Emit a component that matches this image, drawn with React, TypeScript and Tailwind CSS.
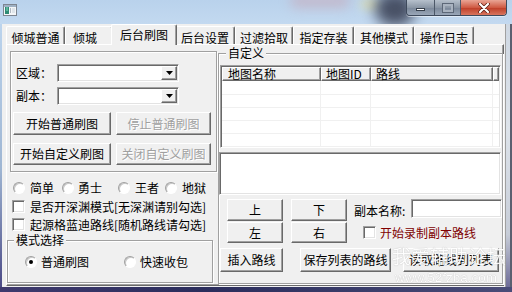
import React from "react"

const raised =
  "border border-t-white border-l-white border-r-[#696969] border-b-[#696969] shadow-[inset_-1px_-1px_0_#a0a0a0]"
const sunken =
  "border border-t-[#a0a0a0] border-l-[#a0a0a0] border-r-white border-b-white shadow-[inset_1px_1px_0_#696969,inset_-1px_-1px_0_#e3e3e3]"
const etched = "border border-[#a0a0a0] shadow-[inset_1px_1px_0_#fff,1px_1px_0_#fff]"

interface Tab {
  label: string
  width: string
  active?: boolean
  align?: string
}

const tabs: Tab[] = [
  { label: "倾城普通", width: "w-[59px]" },
  { label: "倾城", width: "w-[48px]", align: "justify-start pl-[7px]" },
  { label: "后台刷图", width: "w-[66px]", active: true },
  { label: "后台设置", width: "w-[60px]" },
  { label: "过滤拾取", width: "w-[58px]" },
  { label: "指定存装", width: "w-[61px]" },
  { label: "其他模式", width: "w-[60px]" },
  { label: "操作日志", width: "w-[60px]" },
]

function Btn({
  children,
  className = "",
  disabled,
}: {
  children: React.ReactNode
  className?: string
  disabled?: boolean
}) {
  return (
    <button
      type="button"
      className={`${raised} flex shrink-0 items-center justify-center whitespace-nowrap bg-[#f0f0f0] leading-[12px] ${
        disabled ? "text-[#a0a0a0] [text-shadow:1px_1px_0_#fff]" : "text-black"
      } ${className}`}
    >
      {children}
    </button>
  )
}

function Combo() {
  return (
    <div className={`${sunken} flex h-[18px] w-[122px] justify-end bg-white p-[1px]`}>
      <div className={`${raised} flex h-full w-[16px] items-center justify-center bg-[#f0f0f0]`}>
        <svg width="7" height="4" viewBox="0 0 7 4">
          <path d="M0 0h7L3.5 4z" fill="#000" />
        </svg>
      </div>
    </div>
  )
}

function Radio({ checked }: { checked?: boolean }) {
  return (
    <span className="flex h-[12px] w-[12px] shrink-0 items-center justify-center rounded-full border border-t-[#a0a0a0] border-l-[#a0a0a0] border-r-white border-b-white bg-white shadow-[inset_1px_1px_0_#c8c8c8]">
      {checked && <span className="h-[4px] w-[4px] rounded-full bg-black" />}
    </span>
  )
}

function Check() {
  return <span className={`${sunken} block h-[13px] w-[13px] shrink-0 bg-white`} />
}

function WinIcon() {
  return (
    <svg width="14" height="12" viewBox="0 0 14 12">
      <rect x="0.5" y="0.5" width="13" height="11" fill="#f4f6f8" stroke="#7d8590" />
      <rect x="1" y="1" width="12" height="2" fill="#9fb1c4" />
      <rect x="2" y="3" width="4" height="7" fill="#2f8a74" />
      <rect x="3" y="3" width="2" height="4" fill="#5bb59a" />
      <rect x="7" y="4" width="1" height="5" fill="#b0b8c2" />
      <rect x="9" y="4" width="3" height="5" fill="#dfe5ea" />
    </svg>
  )
}

function TitleBar() {
  return (
    <div className="relative flex h-[24px] shrink-0 items-start justify-between overflow-hidden bg-[linear-gradient(180deg,#b9d2ec,#c3d9f0)]">
      {/* glass blur showing through */}
      <div className="absolute left-[290px] top-[-6px] h-[14px] w-[60px] rounded-full bg-[#c9a9b8] opacity-60 blur-[6px]" />
      <div className="absolute left-[360px] top-[-2px] h-[12px] w-[20px] rounded-full bg-[#e8e0a0] opacity-60 blur-[5px]" />
      <div className="absolute left-[375px] top-[-8px] h-[34px] w-[40px] rounded-full bg-[#2b3044] opacity-80 blur-[7px]" />
      <div className="relative ml-[3px] mt-[4px]">
        <WinIcon />
      </div>
      <div className="relative mr-[5px] flex h-[16px] overflow-hidden rounded-b-[4px] border border-t-0 border-[#3e4a5c] shadow-[0_1px_0_rgba(255,255,255,0.5)]">
        <div className="flex w-[28px] items-center justify-center border-r border-[#4c5868] bg-[linear-gradient(180deg,#b6c0cc,#8b97a6_50%,#7a8799_51%,#9aa7b8)]">
          <span className="mt-[3px] block h-[3px] w-[9px] border border-[#37404c] bg-white" />
        </div>
        <div className="flex w-[26px] items-center justify-center border-r border-[#4c5868] bg-[linear-gradient(180deg,#b6c0cc,#8b97a6_50%,#7a8799_51%,#9aa7b8)]">
          <span className="block h-[8px] w-[10px] border-2 border-[#a9b3c0] bg-transparent outline outline-1 outline-[#5d6878]" />
        </div>
        <div className="flex w-[45px] items-center justify-center bg-[linear-gradient(180deg,#e9a595,#cf5a43_50%,#bd3c26_51%,#d8755e)]">
          <svg width="12" height="10" viewBox="0 0 12 10">
            <path d="M2 1l8 8M10 1l-8 8" stroke="#5a1a10" strokeWidth="3.6" strokeLinecap="round" />
            <path d="M2 1l8 8M10 1l-8 8" stroke="#fff" strokeWidth="2.2" strokeLinecap="round" />
          </svg>
        </div>
      </div>
    </div>
  )
}

function TabStrip() {
  return (
    <div className="flex h-[20px] items-end">
      {tabs.map((t) =>
        t.active ? (
          <div
            key={t.label}
            className={`relative z-10 -mx-[2px] -mb-px flex h-[21px] ${t.width} justify-center rounded-t-[2px] border-l border-t border-r border-t-white border-l-white border-r-[#696969] bg-[#f0f0f0] pt-[3px] leading-[13px] shadow-[inset_-1px_0_0_#a0a0a0]`}
          >
            {t.label}
          </div>
        ) : (
          <div
            key={t.label}
            className={`flex h-[18px] ${t.width} ${t.align ?? "justify-center"} rounded-t-[2px] border-l border-t border-r border-t-white border-l-white border-r-[#696969] bg-[#f0f0f0] pt-[4px] leading-[13px] shadow-[inset_-1px_0_0_#a0a0a0]`}
          >
            {t.label}
          </div>
        ),
      )}
    </div>
  )
}

function LeftColumn() {
  return (
    <div className="flex w-[211px] shrink-0 flex-col">
      <div className={`${etched} ml-[3px] mt-[6px] h-[121px] w-[207px]`}>
        <div className="mt-[12px] flex h-[18px] items-center">
          <span className="w-[46px] pl-[5px] leading-[12px]">区域：</span>
          <Combo />
        </div>
        <div className="mt-[5px] flex h-[18px] items-center">
          <span className="w-[46px] pl-[5px] leading-[12px]">副本：</span>
          <Combo />
        </div>
        <div className="mt-[7px] flex gap-[5px] pl-[2px]">
          <Btn className="h-[23px] w-[98px]">开始普通刷图</Btn>
          <Btn className="h-[23px] w-[95px]" disabled>
            停止普通刷图
          </Btn>
        </div>
        <div className="mt-[8px] flex gap-[5px] pl-[2px]">
          <Btn className="h-[22px] w-[98px]">开始自定义刷图</Btn>
          <Btn className="h-[22px] w-[95px]" disabled>
            关闭自定义刷图
          </Btn>
        </div>
      </div>

      <div className="ml-[6px] mt-[9px] flex h-[13px] items-center leading-[12px]">
        <div className="flex w-[49px] items-center gap-[5px]">
          <Radio />
          <span>简单</span>
        </div>
        <div className="flex w-[56px] items-center gap-[4px]">
          <Radio />
          <span>勇士</span>
        </div>
        <div className="flex w-[47px] items-center gap-[5px]">
          <Radio />
          <span>王者</span>
        </div>
        <div className="flex items-center gap-[5px]">
          <Radio />
          <span>地狱</span>
        </div>
      </div>

      <div className="ml-[5px] mt-[6px] flex h-[13px] items-center gap-[5px] leading-[12px]">
        <Check />
        <span className="whitespace-nowrap">是否开深渊模式[无深渊请别勾选]</span>
      </div>
      <div className="ml-[5px] mt-[5px] flex h-[13px] items-center gap-[5px] leading-[12px]">
        <Check />
        <span className="whitespace-nowrap">起源格蓝迪路线[随机路线请勾选]</span>
      </div>

      <fieldset className={`${etched} mt-[3px] h-[49px] w-[206px]`}>
        <legend className="ml-[6px] bg-[#f0f0f0] px-[2px] leading-[12px]">模式选择</legend>
        <div className="mt-[10px] flex items-center pl-[17px] leading-[12px]">
          <div className="flex w-[99px] items-center gap-[4px]">
            <Radio checked />
            <span>普通刷图</span>
          </div>
          <div className="flex items-center gap-[4px]">
            <Radio />
            <span>快速收包</span>
          </div>
        </div>
      </fieldset>
    </div>
  )
}

function ListView() {
  const rows = [14, 13, 13, 13, 13, 13]
  return (
    <div className={`${sunken} ml-[1px] mt-[6px] h-[83px] w-[281px] overflow-hidden bg-white p-[1px]`}>
      <div className="flex h-[14px] leading-[12px]">
        <div className={`${raised} w-[99px] shrink-0 bg-[#f0f0f0] pl-[5px]`}>地图名称</div>
        <div className={`${raised} w-[50px] shrink-0 bg-[#f0f0f0] pl-[4px]`}>地图ID</div>
        <div className={`${raised} w-[122px] shrink-0 bg-[#f0f0f0] pl-[4px]`}>路线</div>
        <div className={`${raised} flex-1 bg-[#f0f0f0]`} />
      </div>
      {rows.map((h, i) => (
        <div key={i} className={`flex border-b border-[#f0f0f0] ${h === 14 ? "h-[14px]" : "h-[13px]"}`}>
          <div className="w-[99px] shrink-0 border-r border-[#f0f0f0]" />
          <div className="w-[50px] shrink-0 border-r border-[#f0f0f0]" />
          <div className="w-[122px] shrink-0 border-r border-[#f0f0f0]" />
          <div className="flex-1" />
        </div>
      ))}
    </div>
  )
}

function RightColumn() {
  return (
    <fieldset className={`${etched} mt-[2px] h-[237px] w-[284px] shrink-0`}>
      <legend className="ml-[7px] bg-[#f0f0f0] px-[2px] leading-[12px]">自定义</legend>
      <ListView />
      <div className={`${sunken} mt-[4px] h-[43px] w-[282px] bg-white`} />

      <div className="mt-[4px] flex">
        <div className="ml-[8px] flex flex-col gap-[1px]">
          <div className="flex gap-[8px]">
            <Btn className="h-[22px] w-[56px]">上</Btn>
            <Btn className="h-[22px] w-[56px]">下</Btn>
          </div>
          <div className="flex gap-[8px]">
            <Btn className="h-[21px] w-[56px]">左</Btn>
            <Btn className="h-[21px] w-[56px]">右</Btn>
          </div>
        </div>
        <div className="ml-[7px] flex flex-col">
          <div className="flex h-[19px] items-end">
            <span className="w-[57px] whitespace-nowrap pb-[1px] leading-[12px]">副本名称:</span>
            <div className={`${sunken} h-[19px] w-[91px] bg-white`} />
          </div>
          <div className="ml-[9px] mt-[8px] flex items-center gap-[4px] leading-[12px]">
            <Check />
            <span className="whitespace-nowrap text-[#800000]">开始录制副本路线</span>
          </div>
        </div>
      </div>

      <div className="mt-[5px] flex">
        <Btn className="ml-[1px] h-[24px] w-[63px]">插入路线</Btn>
        <Btn className="ml-[17px] h-[24px] w-[91px]">保存列表的路线</Btn>
        <Btn className="ml-[12px] h-[24px] w-[96px]">读取路线到列表</Btn>
      </div>
    </fieldset>
  )
}

export default function App() {
  return (
    <div className="relative flex h-[292px] w-[512px] flex-col overflow-hidden font-['Noto_Sans_CJK_SC',sans-serif] text-[12px] text-black">
      <TitleBar />
      <div className="flex h-[263px] shrink-0">
        <div className="w-[2px] bg-[linear-gradient(180deg,#bcd4ed_0%,#9fb6d3_55%,#4b4a86_100%)]" />
        <div className="w-[503px] bg-[#f0f0f0] pl-[4px]">
          <div className="w-[498px]">
            <TabStrip />
            <div className="flex h-[242px] border border-t-white border-l-white border-r-[#696969] border-b-[#696969] bg-[#f0f0f0] shadow-[inset_-1px_-1px_0_#a0a0a0]">
              <LeftColumn />
              <RightColumn />
            </div>
          </div>
        </div>
        <div className="w-[7px] border-l border-[#a0a0a0] bg-[linear-gradient(180deg,#cfd8e3,#dde3ea_40%,#c7cdd8_80%,#6e6c98)] shadow-[inset_-2px_0_0_#5a6070]" />
      </div>
      <div className="h-[5px] shrink-0 bg-[linear-gradient(90deg,#3f3a6e,#2b2d5c_40%,#3a3d6a_70%,#4a4c78)]" />

      {/* site watermark over the bottom right corner */}
      <div className="pointer-events-none absolute left-[392px] top-[246px] flex flex-col items-start text-white opacity-90 [text-shadow:0_0_1px_rgba(0,0,0,0.35)]">
        <span className="text-[19px] leading-[20px]">我爱辅助论坛</span>
        <span className="ml-[3px] mt-[5px] font-['Liberation_Sans',sans-serif] text-[13.5px] leading-[14px]">
          www.52fzba.com
        </span>
      </div>
    </div>
  )
}
